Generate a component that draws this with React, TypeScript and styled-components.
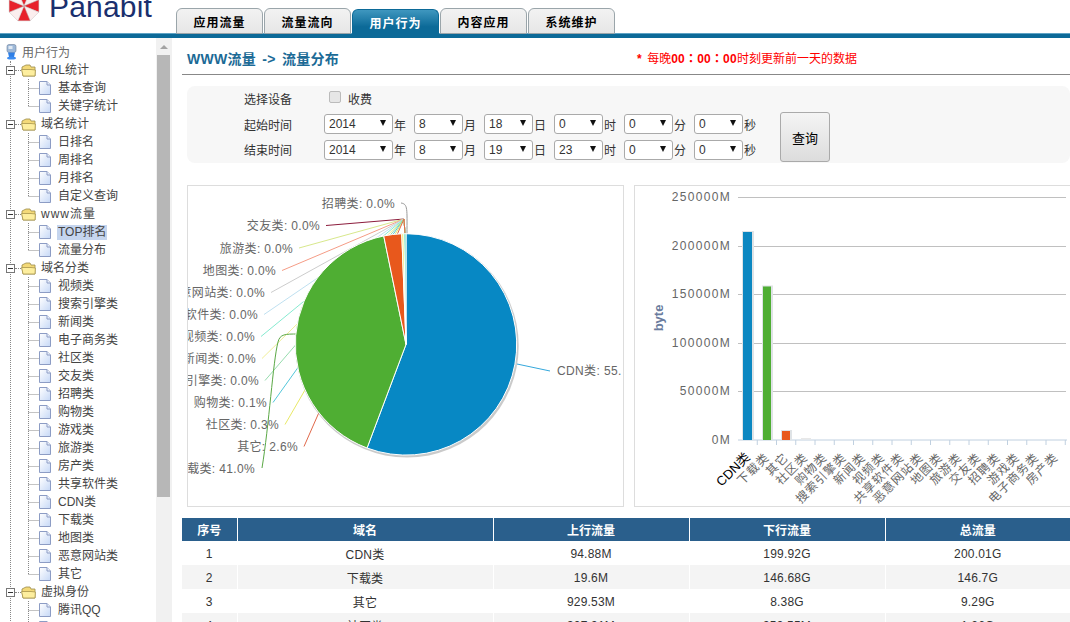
import React from 'react'
import styled, { createGlobalStyle } from 'styled-components'

const FONT = '"Liberation Sans", "Noto Sans CJK SC", sans-serif'

const GlobalStyle = createGlobalStyle`
  html, body {
    margin: 0;
    padding: 0;
    height: 622px;
    overflow: hidden;
    background: #fff;
    font-family: ${FONT};
    font-size: 12px;
    color: #333;
  }
`

const Page = styled.div`
  width: 1070px;
  height: 622px;
  overflow: hidden;
  display: flex;
  flex-direction: column;
`

/* header */

const Header = styled.header`
  height: 34px;
  flex: none;
  display: flex;
  align-items: flex-end;
  border-bottom: 4px solid #0c6a98;
  box-shadow: inset 0 -1px 0 #5fa3c4;
`

const Logo = styled.div`
  width: 176px;
  height: 34px;
  flex: none;
  display: flex;
  align-items: flex-start;
  gap: 9px;
  padding-left: 8px;
  box-sizing: border-box;
  overflow: hidden;
`

const LogoText = styled.span`
  font-size: 30px;
  line-height: 34px;
  margin-top: -10px;
  letter-spacing: 0.2px;
  color: #1a2f6e;
  font-family: "Liberation Sans", sans-serif;
`

const Tabs = styled.nav`
  display: flex;
  gap: 1px;
  align-items: flex-end;
`

const Tab = styled.div<{ $active?: boolean }>`
  width: 87px;
  height: ${(p) => (p.$active ? '29px' : '26px')};
  margin-bottom: ${(p) => (p.$active ? '-4px' : '0')};
  position: relative;
  box-sizing: border-box;
  display: flex;
  align-items: center;
  justify-content: center;
  padding-bottom: ${(p) => (p.$active ? '4px' : '0')};
  border: 1px solid ${(p) => (p.$active ? '#0c6a98' : '#9aa5aa')};
  border-bottom: ${(p) => (p.$active ? '0' : '1px solid #9aa5aa')};
  border-radius: 6px 6px 0 0;
  background: ${(p) =>
    p.$active
      ? 'linear-gradient(#3f97bf, #0c6a98 60%)'
      : 'linear-gradient(#f2f2f2, #e6e6e6)'};
  color: ${(p) => (p.$active ? '#fff' : '#000')};
  font-weight: 700;
  font-size: 12px;
  letter-spacing: 1px;
`

/* left tree */

const Body = styled.div`
  flex: 1;
  min-height: 0;
  display: flex;
`

const Sidebar = styled.aside`
  width: 156px;
  flex: none;
  padding-top: 4px;
  overflow: hidden;
  color: #444;
`

const RootRow = styled.div`
  height: 19px;
  display: flex;
  align-items: center;
  gap: 5px;
  padding-left: 6px;
  color: #666;
`

const TreeRoot = styled.div`
  margin-left: 10px;
  border-left: 1px dotted #888;
`

const GroupRow = styled.div`
  height: 18px;
  display: flex;
  align-items: center;
`

const ExpandBox = styled.span`
  width: 9px;
  height: 9px;
  flex: none;
  box-sizing: border-box;
  margin-left: -5px;
  background: #fff;
  border: 1px solid #777;
  display: flex;
  align-items: center;
  justify-content: center;
  &::after {
    content: '';
    width: 5px;
    height: 1px;
    background: #333;
  }
`

const Dash = styled.span`
  width: 6px;
  flex: none;
  border-top: 1px dotted #888;
`

const GroupLabel = styled.span<{ $spaced?: boolean }>`
  margin-left: 5px;
  line-height: 16px;
  letter-spacing: ${(p) => (p.$spaced ? '1px' : '0')};
`

const ChildRow = styled.div`
  height: 18px;
  display: flex;
  align-items: center;
  margin-left: 17px;
`

const ChildLabel = styled.span<{ $selected?: boolean }>`
  margin-left: 6px;
  padding: 0 1px;
  line-height: 15px;
  background: ${(p) => (p.$selected ? '#c5d5ee' : 'transparent')};
`

const Track = styled.div`
  width: 16px;
  flex: none;
  background: #f1f1f1;
  display: flex;
  flex-direction: column;
`

const TrackArrow = styled.div`
  height: 17px;
  flex: none;
  display: flex;
  align-items: center;
  justify-content: center;
  &::after {
    content: '';
    border-left: 4px solid transparent;
    border-right: 4px solid transparent;
    border-bottom: 4px solid #a3a3a3;
  }
`

const Thumb = styled.div`
  width: 13px;
  height: 442px;
  margin-left: 1px;
  background: #b7b7b7;
`

/* right side */

const Main = styled.main`
  flex: 1;
  min-width: 0;
  overflow: hidden;
`

const TitleBar = styled.div`
  height: 30px;
  margin-left: 10px;
  padding: 0 0 6px 5px;
  display: flex;
  align-items: flex-end;
  border-bottom: 1px solid #888;
`

const Title = styled.h1`
  width: 450px;
  flex: none;
  margin: 0;
  font-size: 14px;
  line-height: 18px;
  font-weight: 700;
  letter-spacing: 0.3px;
  word-spacing: 2px;
  color: #1b6a96;
`

const Note = styled.div`
  font-size: 12px;
  line-height: 18px;
  color: #f00;
`

const NoteStrong = styled.b`
  font-weight: 700;
  font-family: "Liberation Sans", "Noto Sans CJK TC", sans-serif;
  letter-spacing: 0.2px;
`

const NoteStar = styled(NoteStrong)`
  margin-right: 2px;
`

const FilterPanel = styled.form`
  height: 77px;
  margin: 11px 0 0 15px;
  padding-left: 57px;
  display: flex;
  background: #f7f7f7;
  border-radius: 8px;
`

const FilterRows = styled.div`
  display: flex;
  flex-direction: column;
`

const FilterRow = styled.div`
  height: 25.6px;
  display: flex;
  align-items: center;
`

const FieldLabel = styled.span`
  width: 80px;
  flex: none;
`

const CheckLabel = styled.label`
  display: flex;
  align-items: center;
  gap: 7px;
  margin-left: 5px;
`

const Check = styled.input`
  appearance: none;
  width: 12px;
  height: 12px;
  margin: -4px 0 0;
  background: #e6e6e6;
  border: 1px solid #bbb;
  border-radius: 2px;
`

const SelectWrap = styled.span<{ $width: number }>`
  width: ${(p) => p.$width}px;
  height: 20px;
  flex: none;
  position: relative;
  &::after {
    content: '';
    position: absolute;
    right: 7px;
    top: 6px;
    border-left: 3.5px solid transparent;
    border-right: 3.5px solid transparent;
    border-top: 6px solid #111;
    pointer-events: none;
  }
`

const Select = styled.select`
  appearance: none;
  width: 100%;
  height: 20px;
  box-sizing: border-box;
  padding: 0 0 0 4px;
  background: #fff;
  border: 1px solid #aaa;
  border-radius: 3px;
  font: 12px ${FONT};
  color: #333;
`

const Unit = styled.span`
  width: 21px;
  flex: none;
  padding-left: 1px;
  box-sizing: border-box;
  white-space: nowrap;
`

const QueryButton = styled.button`
  width: 50px;
  height: 50px;
  margin: 26px 0 0 16px;
  padding: 0;
  background: linear-gradient(#f4f4f4, #dcdcdc);
  border: 1px solid #aaa;
  border-radius: 3px;
  font: 13px ${FONT};
  color: #000;
`

const Charts = styled.section`
  display: flex;
  gap: 10px;
  margin: 22px 0 0 15px;
`

const ChartPanel = styled.div<{ $width: number }>`
  width: ${(p) => p.$width}px;
  height: 322px;
  flex: none;
  box-sizing: border-box;
  border: 1px solid #ddd;
  overflow: hidden;
  svg {
    display: block;
    font-family: ${FONT};
  }
`

const DataTable = styled.table`
  width: 888px;
  margin: 11px 0 0 10px;
  border-collapse: collapse;
  table-layout: fixed;
  text-align: center;
`

const HeadCell = styled.th`
  height: 23px;
  padding: 0;
  background: #2a5f8c;
  color: #fff;
  font-size: 12px;
  font-weight: 700;
  border-left: 1px solid #fff;
  &:first-child {
    border-left: 0;
  }
`

const Row = styled.tr`
  &:nth-child(even) td {
    background: #f4f4f4;
  }
`

const Cell = styled.td`
  height: 24px;
  padding: 1px 0 0;
  box-sizing: border-box;
  font-size: 12px;
  letter-spacing: 0.2px;
  color: #333;
  border-left: 1px solid #fff;
  &:first-child {
    border-left: 0;
  }
`

/* drawings */

const UmbrellaLogo = () => {
  const cx = 16
  const cy = 6
  const r = 16
  const pt = (deg: number) => {
    const a = (deg * Math.PI) / 180
    return `${cx + r * Math.sin(a)},${cy - r * Math.cos(a)}`
  }
  return (
    <svg width="32" height="23" viewBox="0 0 32 23">
      {[0, 1, 2, 3, 4, 5, 6, 7].map((i) => (
        <polygon
          key={i}
          points={`${cx},${cy} ${pt(i * 45 - 22.5)} ${pt(i * 45 + 22.5)}`}
          fill={i % 2 === 0 ? '#e8202a' : '#fbeeee'}
          stroke="#b9a9a9"
          strokeWidth="0.4"
        />
      ))}
    </svg>
  )
}

const RootIcon = () => (
  <svg width="11" height="16" viewBox="0 0 11 16">
    <rect x="1" y="0.5" width="9" height="8" rx="2" fill="#9db8d8" stroke="#6d7f9a" strokeWidth="0.6" />
    <path d="M2 8.5 L9 8.5 L8 13 L3 13 Z" fill="#2f7fe6" />
    <ellipse cx="5.5" cy="14" rx="4.5" ry="1.6" fill="#3c8cf0" />
    <rect x="2.5" y="2" width="4" height="3" fill="#dfe8f2" />
  </svg>
)

const FolderIcon = () => (
  <svg width="15" height="13" viewBox="0 0 15 13" style={{ flex: 'none' }}>
    <path d="M1 3 L5 1 L9 1 L10 3 L14 3 L14 12 L2 12 L1 6 Z" fill="#f3d978" stroke="#9a8a4a" strokeWidth="0.8" />
    <path d="M0.6 5.5 L10 5.5 L14.4 6 L14 12 L2 12 Z" fill="#fdee9e" stroke="#a8954c" strokeWidth="0.8" />
  </svg>
)

const DocIcon = () => (
  <svg width="12" height="14" viewBox="0 0 12 14" style={{ flex: 'none' }}>
    <defs>
      <linearGradient id="docFill" x1="0" y1="0" x2="1" y2="1">
        <stop offset="0" stopColor="#ffffff" />
        <stop offset="1" stopColor="#c6d8f6" />
      </linearGradient>
    </defs>
    <path d="M0.5 0.5 L8 0.5 L11.5 4 L11.5 13.5 L0.5 13.5 Z" fill="url(#docFill)" stroke="#8c9cc4" />
    <path d="M8 0.5 L8 4 L11.5 4" fill="#eaf0fb" stroke="#8c9cc4" />
  </svg>
)

const Elbow = ({ last }: { last?: boolean }) => (
  <svg width="11" height="18" viewBox="0 0 11 18" style={{ flex: 'none' }}>
    <path
      d={`M0.5 0 L0.5 ${last ? 9.5 : 18} M0.5 9.5 L11 9.5`}
      fill="none"
      stroke="#888"
      strokeDasharray="1 1"
    />
  </svg>
)

/* data */

const treeData = [
  { name: 'URL统计', items: ['基本查询', '关键字统计'] },
  { name: '域名统计', items: ['日排名', '周排名', '月排名', '自定义查询'] },
  { name: 'www流量', items: ['TOP排名', '流量分布'] },
  {
    name: '域名分类',
    items: [
      '视频类',
      '搜索引擎类',
      '新闻类',
      '电子商务类',
      '社区类',
      '交友类',
      '招聘类',
      '购物类',
      '游戏类',
      '旅游类',
      '房产类',
      '共享软件类',
      'CDN类',
      '下载类',
      '地图类',
      '恶意网站类',
      '其它',
    ],
  },
  { name: '虚拟身份', items: ['腾讯QQ', 'MSN'] },
]

const years = ['2013', '2014']
const months = ['8']

const timeFields = (day: string, hour: string) => [
  { value: '2014', options: years, unit: '年', width: 69 },
  { value: '8', options: months, unit: '月', width: 49 },
  { value: day, options: [day], unit: '日', width: 49 },
  { value: hour, options: [hour], unit: '时', width: 49 },
  { value: '0', options: ['0'], unit: '分', width: 49 },
  { value: '0', options: ['0'], unit: '秒', width: 49 },
]

const tableRows = [
  ['1', 'CDN类', '94.88M', '199.92G', '200.01G'],
  ['2', '下载类', '19.6M', '146.68G', '146.7G'],
  ['3', '其它', '929.53M', '8.38G', '9.29G'],
  ['4', '社区类', '307.91M', '959.55M', '1.26G'],
]

const PIE_X = 405
const PIE_Y = 343.4
const PIE_R = 110.7

const pieLabels = [
  { text: '招聘类: 0.0%', right: 394, y: 203, color: '#999999' },
  { text: '交友类: 0.0%', right: 319, y: 225, color: '#8c1c3c' },
  { text: '旅游类: 0.0%', right: 292, y: 247.5, color: '#d8e88c' },
  { text: '地图类: 0.0%', right: 275, y: 270, color: '#f59c86' },
  { text: '恶意网站类: 0.0%', right: 264, y: 292, color: '#cccccc' },
  { text: '共享软件类: 0.0%', right: 257, y: 314, color: '#bfe0f0' },
  { text: '视频类: 0.0%', right: 254, y: 336, color: '#86ead0' },
  { text: '新闻类: 0.0%', right: 255, y: 358, color: '#f0ee98' },
  { text: '搜索引擎类: 0.0%', right: 258, y: 380, color: '#97dcae' },
  { text: '购物类: 0.1%', right: 266, y: 402, color: '#52c6da' },
  { text: '社区类: 0.3%', right: 278, y: 424, color: '#e8e866' },
  { text: '其它: 2.6%', right: 297, y: 446, color: '#e0684a' },
  { text: '下载类: 41.0%', right: 254, y: 468, color: '#5aa845' },
]

const pieSlices = [
  { from: 0, to: 200.6, color: '#0788c4' },
  { from: 200.6, to: 348.4, color: '#4fae33' },
  { from: 348.4, to: 357.8, color: '#e8581c' },
  { from: 357.8, to: 358.9, color: '#efe95c' },
  { from: 358.9, to: 360, color: '#63e0b8' },
]

const slicePath = (from: number, to: number) => {
  const point = (deg: number) => {
    const a = (deg * Math.PI) / 180
    return `${PIE_X + PIE_R * Math.sin(a)} ${PIE_Y - PIE_R * Math.cos(a)}`
  }
  const large = to - from > 180 ? 1 : 0
  return `M${PIE_X} ${PIE_Y} L${point(from)} A${PIE_R} ${PIE_R} 0 ${large} 1 ${point(to)} Z`
}

const leaderPath = (text: string, right: number, y: number) => {
  if (text.startsWith('招聘')) return `M${right + 6} ${y - 1} C${right + 13} ${y} 406 208 406 233`
  if (text.startsWith('下载'))
    return `M${right + 7} ${y - 1} C268 425 272 360 277 341 C279 333 284 333 297 333`
  return `M${right + 6} ${y - 0.5} L403 218 L404 233`
}

const PieChart = () => (
  <svg width="437" height="322" viewBox="187 185 437 322">
    {pieLabels.map(({ text, right, y, color }) => (
      <path key={text} d={leaderPath(text, right, y)} fill="none" stroke={color} strokeWidth="1" />
    ))}
    <path d="M516 363 L549 370" stroke="#35a8dc" strokeWidth="1" fill="none" />
    <circle cx={PIE_X + 1} cy={PIE_Y + 1.5} r={PIE_R + 1} fill="#b4b4b4" opacity="0.7" />
    {pieSlices.map(({ from, to, color }) => (
      <path key={color} d={slicePath(from, to)} fill={color} stroke="#fff" strokeWidth="1" strokeLinejoin="round" />
    ))}
    {pieLabels.map(({ text, right, y }) => (
      <text key={text} x={right} y={y + 4} textAnchor="end" fontSize="12" letterSpacing="0.35" fill="#666">
        {text}
      </text>
    ))}
    <text x="556" y="374" fontSize="12" letterSpacing="0.37" fill="#666">
      CDN类: 55.
    </text>
  </svg>
)

const yTicks = [
  { label: '250000M', y: 196.5 },
  { label: '200000M', y: 245.5 },
  { label: '150000M', y: 293.5 },
  { label: '100000M', y: 342.5 },
  { label: '50000M', y: 390.5 },
  { label: '0M', y: 439 },
]

const barCategories = [
  'CDN类',
  '下载类',
  '其它',
  '社区类',
  '购物类',
  '搜索引擎类',
  '新闻类',
  '视频类',
  '共享软件类',
  '恶意网站类',
  '地图类',
  '旅游类',
  '交友类',
  '招聘类',
  '游戏类',
  '电子商务类',
  '房产类',
]

const bars = [
  { x: 742, width: 9, top: 231, color: '#0c87c1' },
  { x: 762, width: 8, top: 285.5, color: '#4fae33' },
  { x: 781, width: 8, top: 430, color: '#e8581c' },
]

const AXIS_START = 737
const STEP = 19.25

const BarChart = () => (
  <svg width="440" height="322" viewBox="634 185 440 322">
    {yTicks.map(({ label, y }) => (
      <g key={label}>
        {y < 439 && <line x1="737" x2="1065" y1={y} y2={y} stroke="#c0c0c0" />}
        <text x="730" y={y + 3.5} textAnchor="end" fontSize="12" letterSpacing="1.3" fill="#666">
          {label}
        </text>
      </g>
    ))}
    <text
      x="0"
      y="0"
      transform="translate(662 317) rotate(-90)"
      textAnchor="middle"
      fontSize="13"
      fontWeight="700"
      fill="#6b7c9e"
    >
      byte
    </text>
    <line x1="737" x2="1066" y1="439" y2="439" stroke="#c0d0e0" />
    {barCategories.map((name, i) => (
      <line
        key={name}
        x1={AXIS_START + (i + 1) * STEP}
        x2={AXIS_START + (i + 1) * STEP}
        y1="439"
        y2="444"
        stroke="#c0d0e0"
      />
    ))}
    {bars.map(({ x, width, top, color }) => (
      <g key={color}>
        <rect x={x - 1} y={top - 1} width={width + 3} height={439 - top + 1} fill="#dfe3e6" />
        <rect x={x} y={top} width={width} height={439 - top} fill={color} />
      </g>
    ))}
    <rect x="800" y="437" width="10" height="1.5" fill="#e8e8e8" />
    {barCategories.map((name, i) => {
      const first = i === 0
      const x = AXIS_START + (i + 0.5) * STEP + 3
      return (
        <text
          key={name}
          transform={`translate(${x} 457) rotate(-45)`}
          textAnchor="end"
          fontSize={first ? 13 : 12}
          letterSpacing={first ? 0 : 1}
          fill={first ? '#000' : '#666'}
        >
          {name}
        </text>
      )
    })}
  </svg>
)

const TimeRow = ({ label, day, hour }: { label: string; day: string; hour: string }) => (
  <FilterRow>
    <FieldLabel>{label}</FieldLabel>
    {timeFields(day, hour).map(({ value, options, unit, width }) => (
      <React.Fragment key={unit}>
        <SelectWrap $width={width}>
          <Select defaultValue={value}>
            {options.map((o) => (
              <option key={o}>{o}</option>
            ))}
          </Select>
        </SelectWrap>
        <Unit>{unit}</Unit>
      </React.Fragment>
    ))}
  </FilterRow>
)

export default function App() {
  return (
    <Page>
      <GlobalStyle />
      <Header>
        <Logo>
          <UmbrellaLogo />
          <LogoText>Panabit</LogoText>
        </Logo>
        <Tabs>
          <Tab>应用流量</Tab>
          <Tab>流量流向</Tab>
          <Tab $active>用户行为</Tab>
          <Tab>内容应用</Tab>
          <Tab>系统维护</Tab>
        </Tabs>
      </Header>
      <Body>
        <Sidebar>
          <RootRow>
            <RootIcon />
            用户行为
          </RootRow>
          <TreeRoot>
            {treeData.map((group) => (
              <div key={group.name}>
                <GroupRow>
                  <ExpandBox />
                  <Dash />
                  <FolderIcon />
                  <GroupLabel $spaced={group.name === 'www流量'}>{group.name}</GroupLabel>
                </GroupRow>
                {group.items.map((item, i) => (
                  <ChildRow key={item}>
                    <Elbow last={i === group.items.length - 1} />
                    <DocIcon />
                    <ChildLabel $selected={item === 'TOP排名'}>{item}</ChildLabel>
                  </ChildRow>
                ))}
              </div>
            ))}
          </TreeRoot>
        </Sidebar>
        <Track>
          <TrackArrow />
          <Thumb />
        </Track>
        <Main>
          <TitleBar>
            <Title>WWW流量 -&gt; 流量分布</Title>
            <Note>
              <NoteStar>*</NoteStar> 每晚<NoteStrong>00：00：00</NoteStrong>时刻更新前一天的数据
            </Note>
          </TitleBar>
          <FilterPanel>
            <FilterRows>
              <FilterRow>
                <FieldLabel>选择设备</FieldLabel>
                <CheckLabel>
                  <Check type="checkbox" />
                  收费
                </CheckLabel>
              </FilterRow>
              <TimeRow label="起始时间" day="18" hour="0" />
              <TimeRow label="结束时间" day="19" hour="23" />
            </FilterRows>
            <QueryButton type="button">查询</QueryButton>
          </FilterPanel>
          <Charts>
            <ChartPanel $width={437}>
              <PieChart />
            </ChartPanel>
            <ChartPanel $width={442}>
              <BarChart />
            </ChartPanel>
          </Charts>
          <DataTable>
            <colgroup>
              <col width="55" />
              <col width="256" />
              <col width="196" />
              <col width="196" />
              <col width="185" />
            </colgroup>
            <thead>
              <tr>
                {['序号', '域名', '上行流量', '下行流量', '总流量'].map((h) => (
                  <HeadCell key={h}>{h}</HeadCell>
                ))}
              </tr>
            </thead>
            <tbody>
              {tableRows.map((row) => (
                <Row key={row[0]}>
                  {row.map((value, i) => (
                    <Cell key={i}>{value}</Cell>
                  ))}
                </Row>
              ))}
            </tbody>
          </DataTable>
        </Main>
      </Body>
    </Page>
  )
}
